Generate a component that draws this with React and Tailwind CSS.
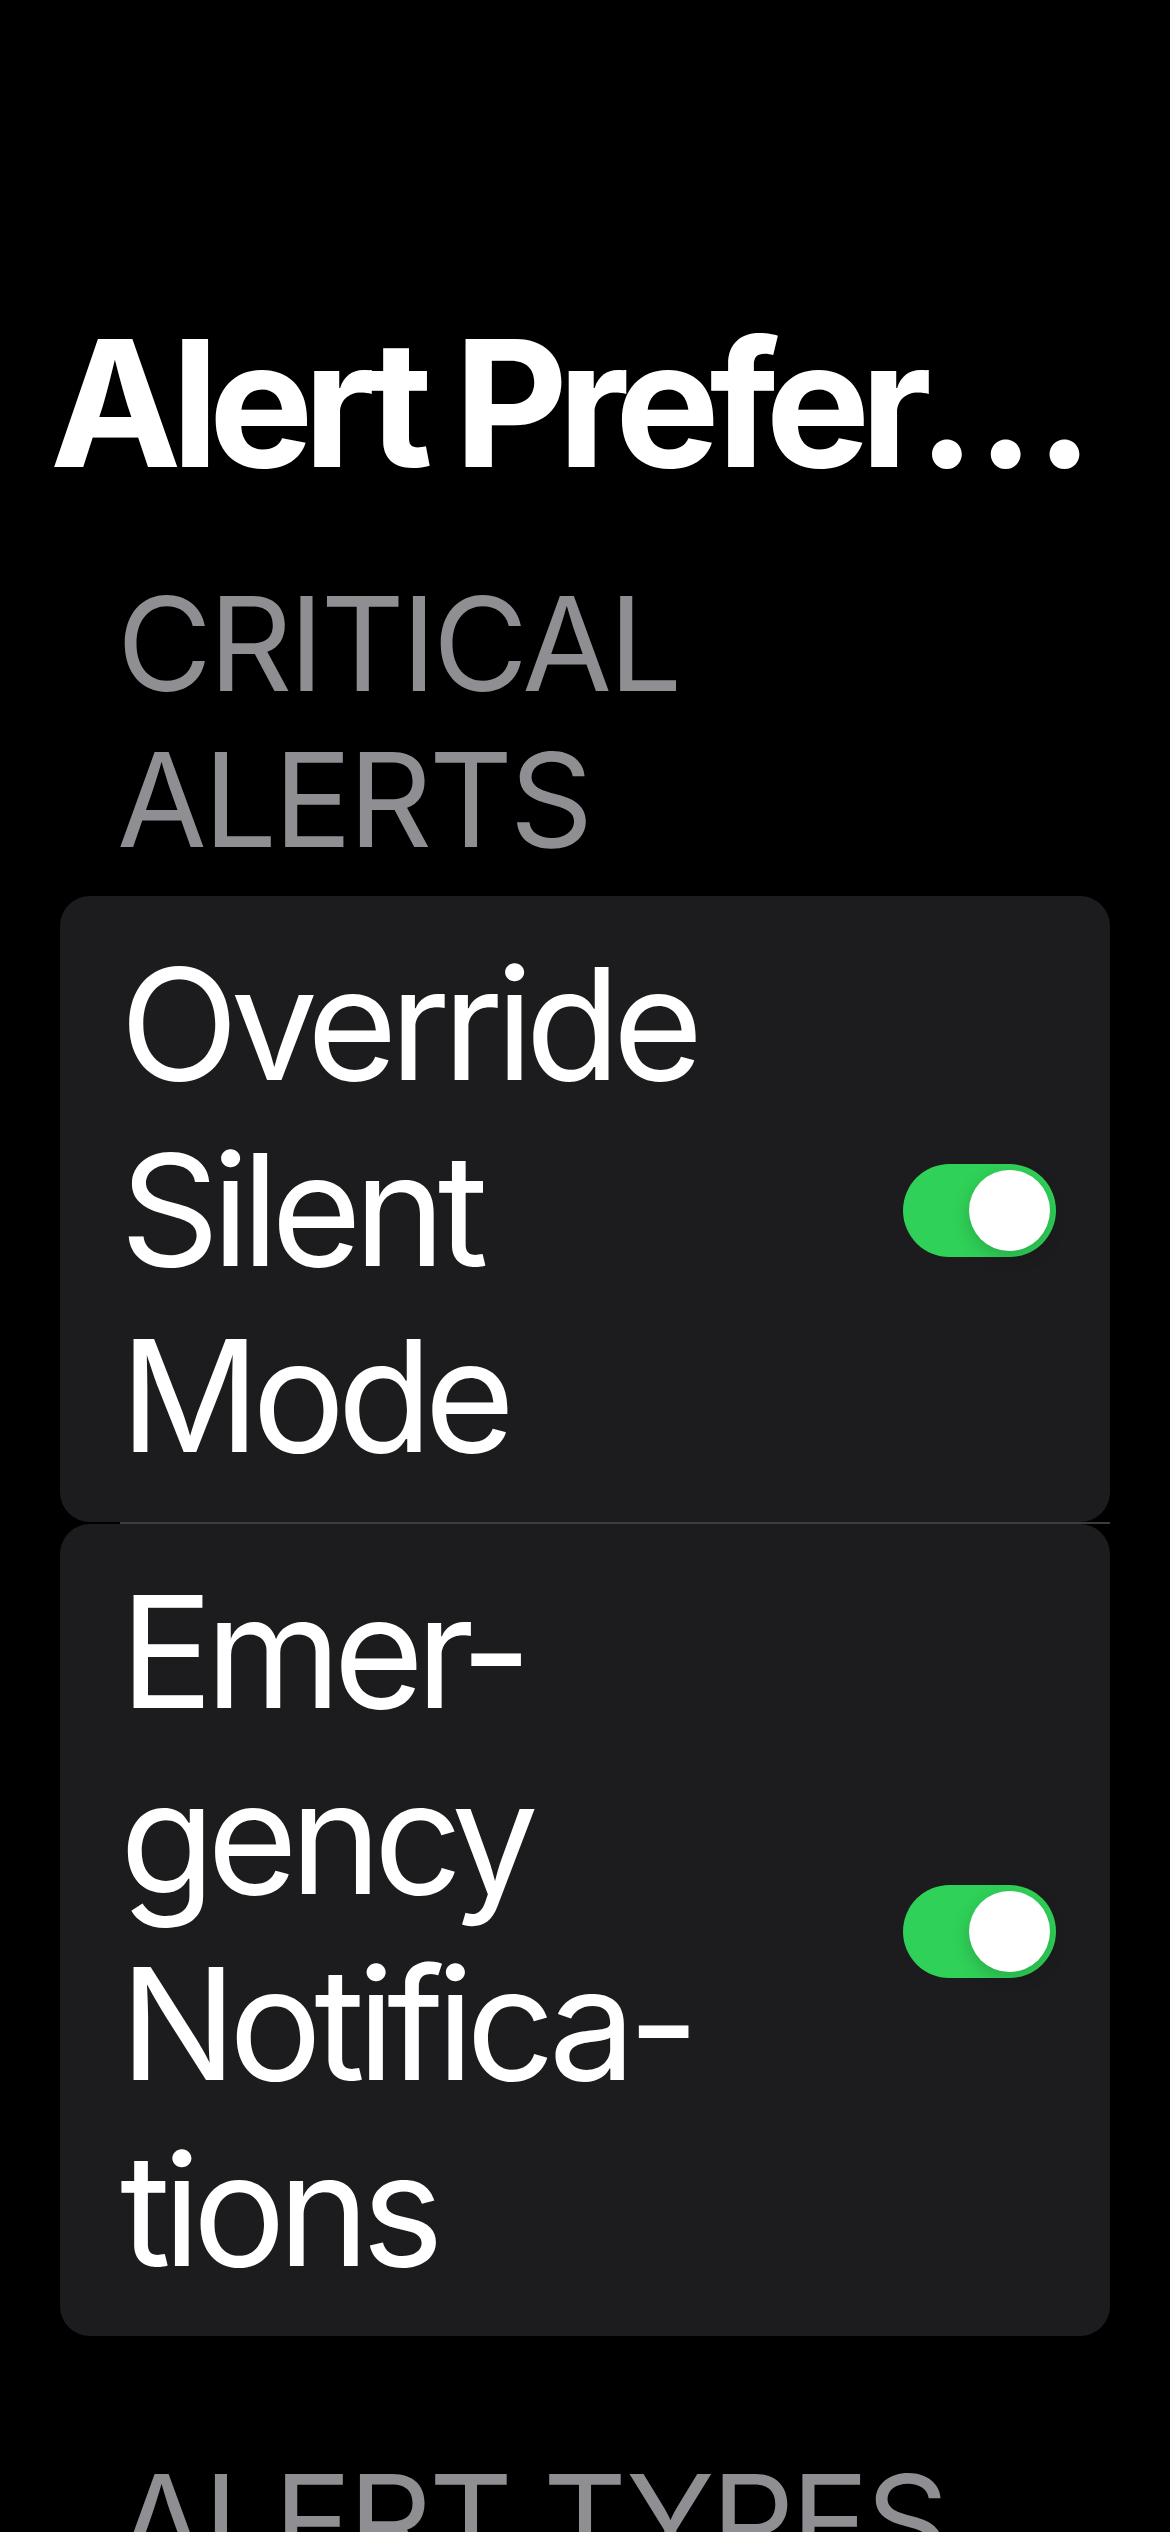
import { useState } from 'react';

function Toggle({ on, onChange }) {
  return (
    <button
      type="button"
      onClick={() => onChange(!on)}
      className={`shrink-0 w-[153px] h-[93px] rounded-full flex items-center px-[6px] ${
        on ? 'bg-[#30d158] justify-end' : 'bg-[#39393d] justify-start'
      }`}
    >
      <span className="block w-[81px] h-[81px] rounded-full bg-white shadow-[0_6px_18px_rgba(0,0,0,0.18)]" />
    </button>
  );
}

function SectionHeader({ children }) {
  return (
    <h2 className="pl-[117px] pr-[60px] text-[130px] leading-[156px] tracking-[-0.025em] text-[#8e8e93] uppercase">
      {children}
    </h2>
  );
}

function Row({ children, on, onChange }) {
  return (
    <div className="flex items-center gap-[40px] bg-[#1c1c1e] rounded-[30px] pl-[60px] pr-[54px] pt-[35px] pb-[33px]">
      <div className="flex-1 min-w-0 text-[155px] leading-[186px] tracking-[-0.05em] text-white">
        {children}
      </div>
      <Toggle on={on} onChange={onChange} />
    </div>
  );
}

export default function App() {
  const [silent, setSilent] = useState(true);
  const [emergency, setEmergency] = useState(true);

  return (
    <div
      className="min-h-screen bg-black text-white"
      style={{ fontFamily: 'Inter, "Liberation Sans", sans-serif' }}
    >
      <div className="pt-[294px]">
        {/* Large title */}
        <h1 className="pl-[50px] pr-[36px] text-[176px] leading-[217px] font-bold tracking-[-0.058em] truncate">
          Alert Preferences
        </h1>

        <div className="mt-[55px]">
          <SectionHeader>Critical Alerts</SectionHeader>
        </div>

        <div className="mt-[18px] px-[60px]">
          <Row on={silent} onChange={setSilent}>
            Override Silent Mode
          </Row>
          <div className="ml-[60px] h-[2px] bg-[#3d3d40]" />
          <Row on={emergency} onChange={setEmergency}>
            Emer-<br />gency<br />Notifica-<br />tions
          </Row>
        </div>

        <div className="mt-[108px]">
          <SectionHeader>Alert Types</SectionHeader>
        </div>
      </div>
    </div>
  );
}
